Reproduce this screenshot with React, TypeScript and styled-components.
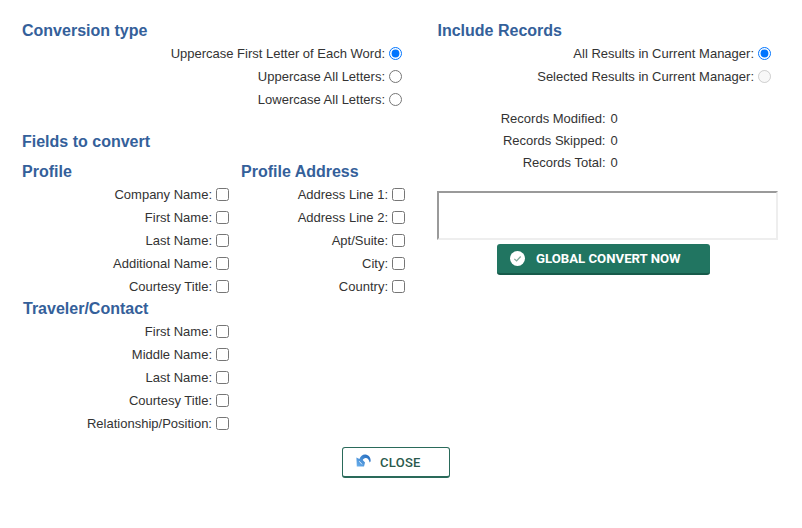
import React from 'react';
import styled, { createGlobalStyle } from 'styled-components';

const GlobalStyle = createGlobalStyle`
  html, body {
    margin: 0;
    padding: 0;
    background: #fff;
  }
  body {
    font-family: "Liberation Sans", Arial, sans-serif;
    font-size: 13px;
    color: #333;
  }
`;

const conversionTypes = [
  { label: 'Uppercase First Letter of Each Word:', checked: true },
  { label: 'Uppercase All Letters:', checked: false },
  { label: 'Lowercase All Letters:', checked: false },
];

const profileFields = ['Company Name:', 'First Name:', 'Last Name:', 'Additional Name:', 'Courtesy Title:'];
const addressFields = ['Address Line 1:', 'Address Line 2:', 'Apt/Suite:', 'City:', 'Country:'];
const travelerFields = ['First Name:', 'Middle Name:', 'Last Name:', 'Courtesy Title:', 'Relationship/Position:'];
const totals = ['Records Modified:', 'Records Skipped:', 'Records Total:'];

const App = () => {
  return (
    <Page>
      <GlobalStyle />
      <Columns>
        <LeftColumn>
          <Heading>Conversion type</Heading>
          <OptionList $width={380}>
            {conversionTypes.map(item => (
              <OptionRow key={item.label}>
                {item.label}
                <Radio type="radio" name="conversion" defaultChecked={item.checked} />
              </OptionRow>
            ))}
          </OptionList>

          <FieldsHeading>Fields to convert</FieldsHeading>
          <FieldGroups>
            <div>
              <Heading>Profile</Heading>
              <OptionList $width={207}>
                {profileFields.map(name => (
                  <OptionRow key={name}>
                    {name}
                    <Check type="checkbox" />
                  </OptionRow>
                ))}
              </OptionList>
            </div>
            <AddressGroup>
              <Heading>Profile Address</Heading>
              <OptionList $width={164}>
                {addressFields.map(name => (
                  <OptionRow key={name}>
                    {name}
                    <Check type="checkbox" />
                  </OptionRow>
                ))}
              </OptionList>
            </AddressGroup>
          </FieldGroups>

          <TravelerHeading>Traveler/Contact</TravelerHeading>
          <OptionList $width={207}>
            {travelerFields.map(name => (
              <OptionRow key={name}>
                {name}
                <Check type="checkbox" />
              </OptionRow>
            ))}
          </OptionList>
        </LeftColumn>

        <RightColumn>
          <Heading>Include Records</Heading>
          <OptionList $width={333.5}>
            <OptionRow>
              All Results in Current Manager:
              <Radio type="radio" name="records" defaultChecked />
            </OptionRow>
            <OptionRow>
              Selected Results in Current Manager:
              <Radio type="radio" name="records" disabled />
            </OptionRow>
          </OptionList>

          <Totals>
            {totals.map(name => (
              <TotalRow key={name}>
                <TotalLabel>{name}</TotalLabel>
                <TotalValue>0</TotalValue>
              </TotalRow>
            ))}
          </Totals>

          <Message />
          <ConvertButton type="button">
            <svg width="15" height="15" viewBox="0 0 16 16">
              <circle cx="8" cy="8" r="8" fill="#fff" />
              <path d="M4.6 8.4 7 10.6 11.4 5.8" fill="none" stroke="#7fa99a" strokeWidth="1.4" />
            </svg>
            GLOBAL CONVERT NOW
          </ConvertButton>
        </RightColumn>
      </Columns>

      <Footer>
        <CloseButton type="button">
          <CloseIcon width="15" height="13" viewBox="0 0 15 13">
            <defs>
              <linearGradient id="closeArrow" x1="0" y1="1" x2="1" y2="0">
                <stop offset="0" stopColor="#6cb2ee" />
                <stop offset="1" stopColor="#1f66ba" />
              </linearGradient>
            </defs>
            <path
              d="M3.4 5C4.4 2.2 6.8.3 9.4.5 12.6.8 14.8 3.4 14.7 7.2L13.6 8.4C13.2 5.6 11.6 3.8 9.6 3.9 8.3 4 7.2 4.8 6.7 6L9 8.4 8 12.4.8 12.5.4 3.4Z"
              fill="url(#closeArrow)"
            />
            <path d="M3.2 7.2 6 10.4" stroke="#d8eafa" strokeWidth="1" />
          </CloseIcon>
          CLOSE
        </CloseButton>
      </Footer>
    </Page>
  );
};

export default App;

const Page = styled.div`
  width: 802px;
  height: 528px;
  padding: 21px 0 0 22px;
  box-sizing: border-box;
  overflow: hidden;
`;

const Columns = styled.div`
  display: flex;
  height: 415px;
`;

const LeftColumn = styled.div`
  width: 415.5px;
`;

const RightColumn = styled.div`
  width: 341.5px;
`;

const Heading = styled.h3`
  margin: 0;
  height: 19px;
  font-size: 16px;
  line-height: 19px;
  font-weight: bold;
  color: #34609a;
`;

const FieldsHeading = styled(Heading)`
  margin-top: 21px;
  margin-bottom: 11px;
`;

const TravelerHeading = styled(Heading)`
  margin: 1px 0 0 1px;
`;

const FieldGroups = styled.div`
  display: flex;
`;

const AddressGroup = styled.div`
  margin-left: 12px;
`;

const OptionList = styled.div<{ $width: number }>`
  width: ${p => p.$width}px;
  margin-top: 2px;
`;

const OptionRow = styled.label`
  display: flex;
  justify-content: flex-end;
  align-items: center;
  height: 23px;
  white-space: nowrap;
`;

const Radio = styled.input`
  width: 13px;
  height: 13px;
  margin: 0 0 0 4px;
`;

const Check = styled.input`
  width: 13px;
  height: 13px;
  margin: 0 0 0 4px;
`;

const Totals = styled.div`
  margin-top: 19px;
  width: 184px;
`;

const TotalRow = styled.div`
  display: flex;
  justify-content: flex-end;
  align-items: center;
  height: 22px;
`;

const TotalLabel = styled.span`
  white-space: nowrap;
`;

const TotalValue = styled.span`
  width: 11px;
  margin-left: 5px;
  font-size: 13px;
`;

const Message = styled.textarea`
  display: block;
  box-sizing: border-box;
  width: 341px;
  height: 49px;
  margin: 18px 0 0 -0.5px;
  padding: 0;
  resize: none;
  border-style: solid;
  border-width: 2px;
  border-color: #9a9a9a #eeeeee #eeeeee #9a9a9a;
  background: #fff;
`;

const ConvertButton = styled.button`
  display: flex;
  align-items: center;
  gap: 11px;
  box-sizing: border-box;
  width: 213px;
  height: 31px;
  margin: 4px 0 0 59.5px;
  padding: 0 0 0 13px;
  background: #217561;
  border: 0;
  border-bottom: 2px solid #165a4a;
  border-radius: 3px;
  font-family: Roboto, sans-serif;
  font-size: 13.2px;
  font-weight: bold;
  color: #fff;
`;

const Footer = styled.div`
  display: flex;
  justify-content: flex-start;
  margin: 11px 0 0 320px;
`;

const CloseButton = styled.button`
  display: flex;
  align-items: center;
  gap: 9px;
  box-sizing: border-box;
  width: 108px;
  height: 31px;
  padding: 0 0 0 13px;
  background: #fff;
  border: 1px solid #2a6a5a;
  border-bottom-width: 2px;
  border-radius: 3px;
  font-family: Roboto, sans-serif;
  font-size: 13px;
  font-weight: 500;
  letter-spacing: 0.3px;
  color: #2a5a4c;
`;

const CloseIcon = styled.svg`
  margin-top: -3px;
`;
